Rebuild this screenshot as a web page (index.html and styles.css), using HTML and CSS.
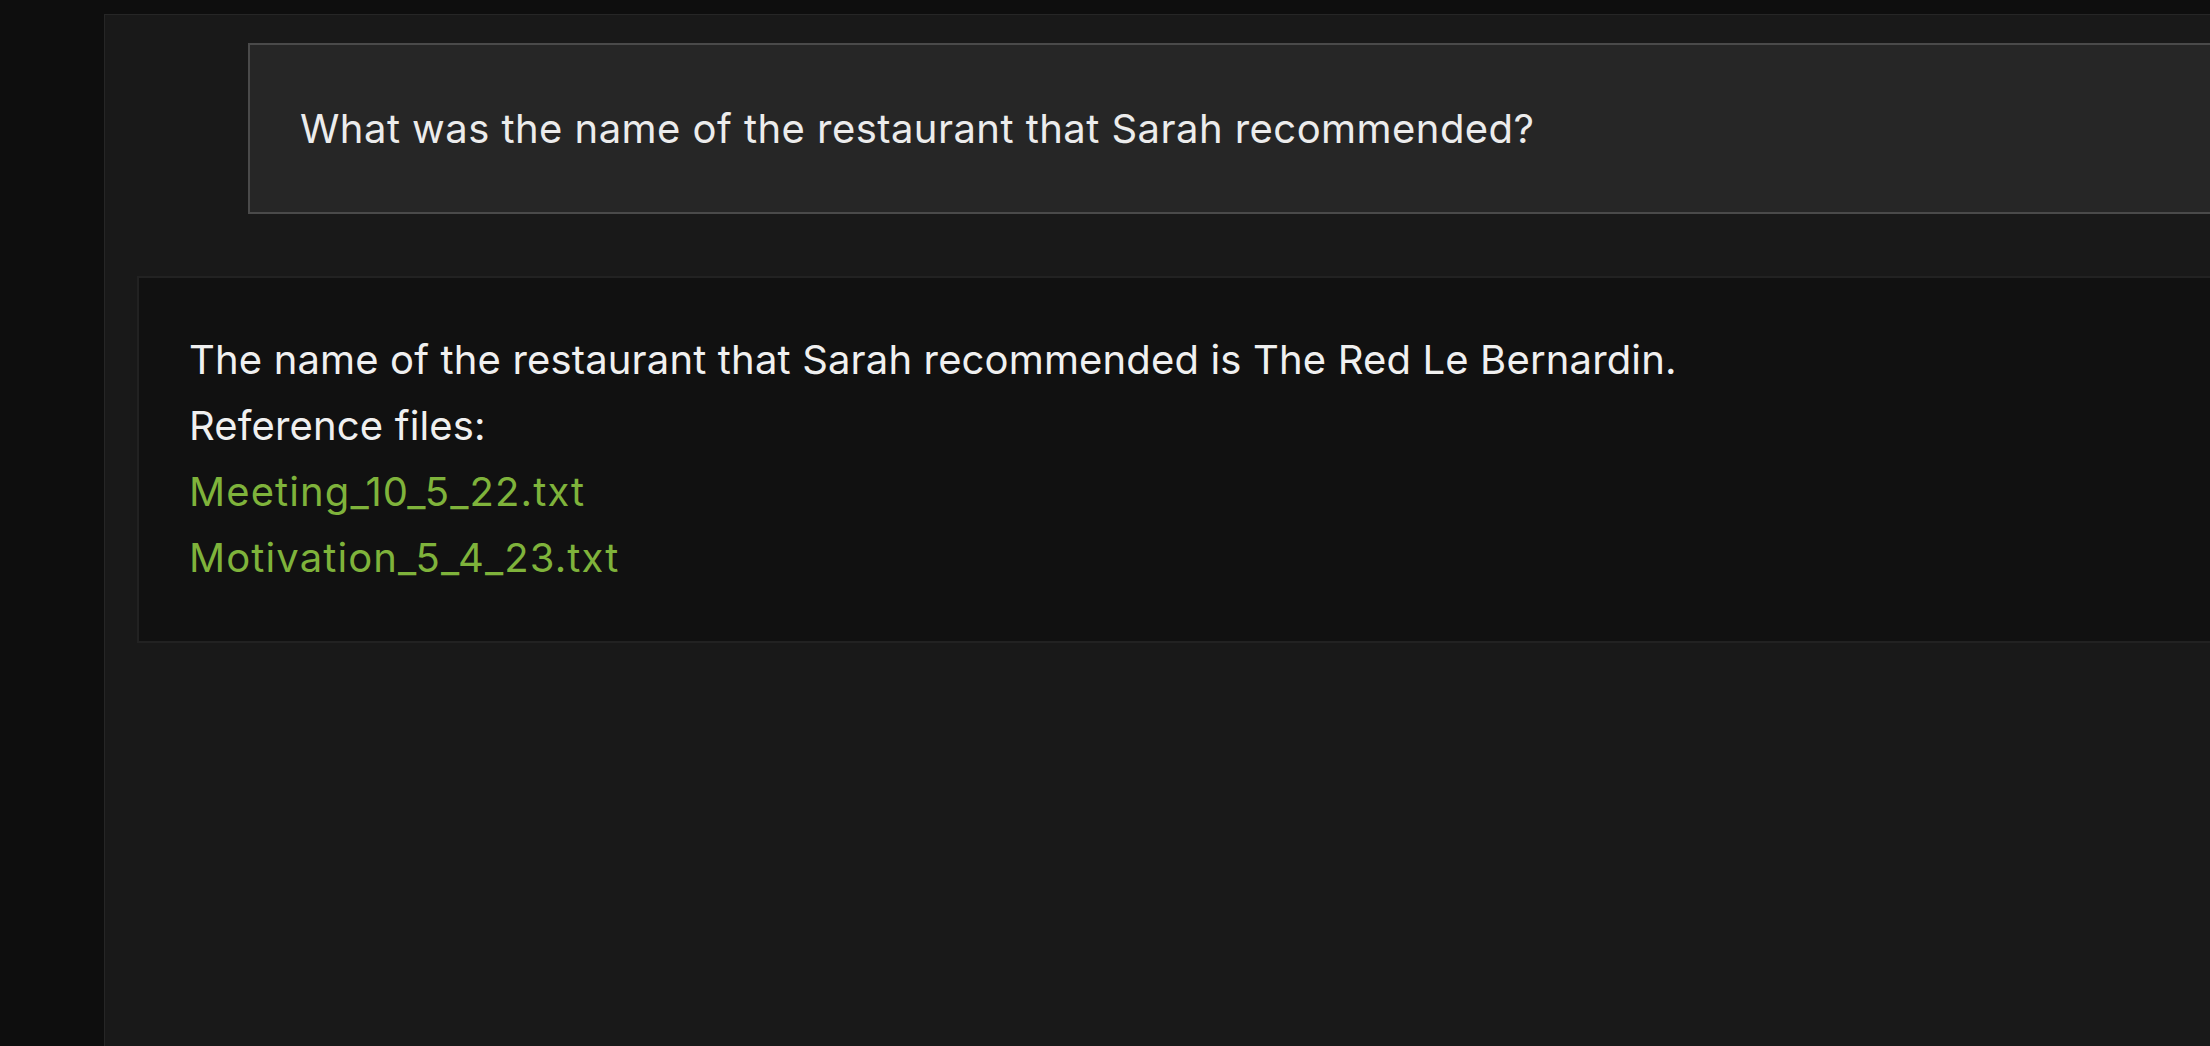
FILE: index.html
```html
<!DOCTYPE html>
<html lang="en">
<head>
<meta charset="utf-8">
<title>Chat</title>
<link rel="stylesheet" href="styles.css">
</head>
<body>
<div class="panel">
  <div class="question">What was the name of the restaurant that Sarah recommended?</div>
  <div class="answer">
    <p class="line">The name of the restaurant that Sarah recommended is The Red Le Bernardin.</p>
    <p class="line">Reference files:</p>
    <p class="line link">Meeting_10_5_22.txt</p>
    <p class="line link">Motivation_5_4_23.txt</p>
  </div>
</div>
</body>
</html>
```

FILE: styles.css
```css
html, body {
  margin: 0;
  padding: 0;
  height: 100%;
  overflow: hidden;
  background: #0e0e0e;
  font-family: Inter, Roboto, "Liberation Sans", sans-serif;
}
.panel {
  box-sizing: border-box;
  margin: 14px -40px 0 104px;
  height: 1100px;
  background: #191919;
  border-top: 1px solid #262626;
  border-left: 1px solid #262626;
  padding: 28px 0 0 32px;
}
.question {
  box-sizing: border-box;
  margin-left: 111px;
  height: 171px;
  background: #262626;
  border: 2px solid #4a4a4a;
  display: flex;
  align-items: center;
  padding-left: 50px;
  color: #ececec;
  font-size: 40px;
  letter-spacing: 0.45px;
}
.answer {
  box-sizing: border-box;
  margin-top: 62px;
  background: #111111;
  border: 2px solid #222222;
  padding: 49px 0 50px 50px;
}
.line {
  margin: 0;
  font-size: 40px;
  line-height: 66px;
  color: #f0f0f0;
  letter-spacing: 0.15px;
}
.link {
  color: #7fb33b;
  letter-spacing: 1.1px;
}
```
